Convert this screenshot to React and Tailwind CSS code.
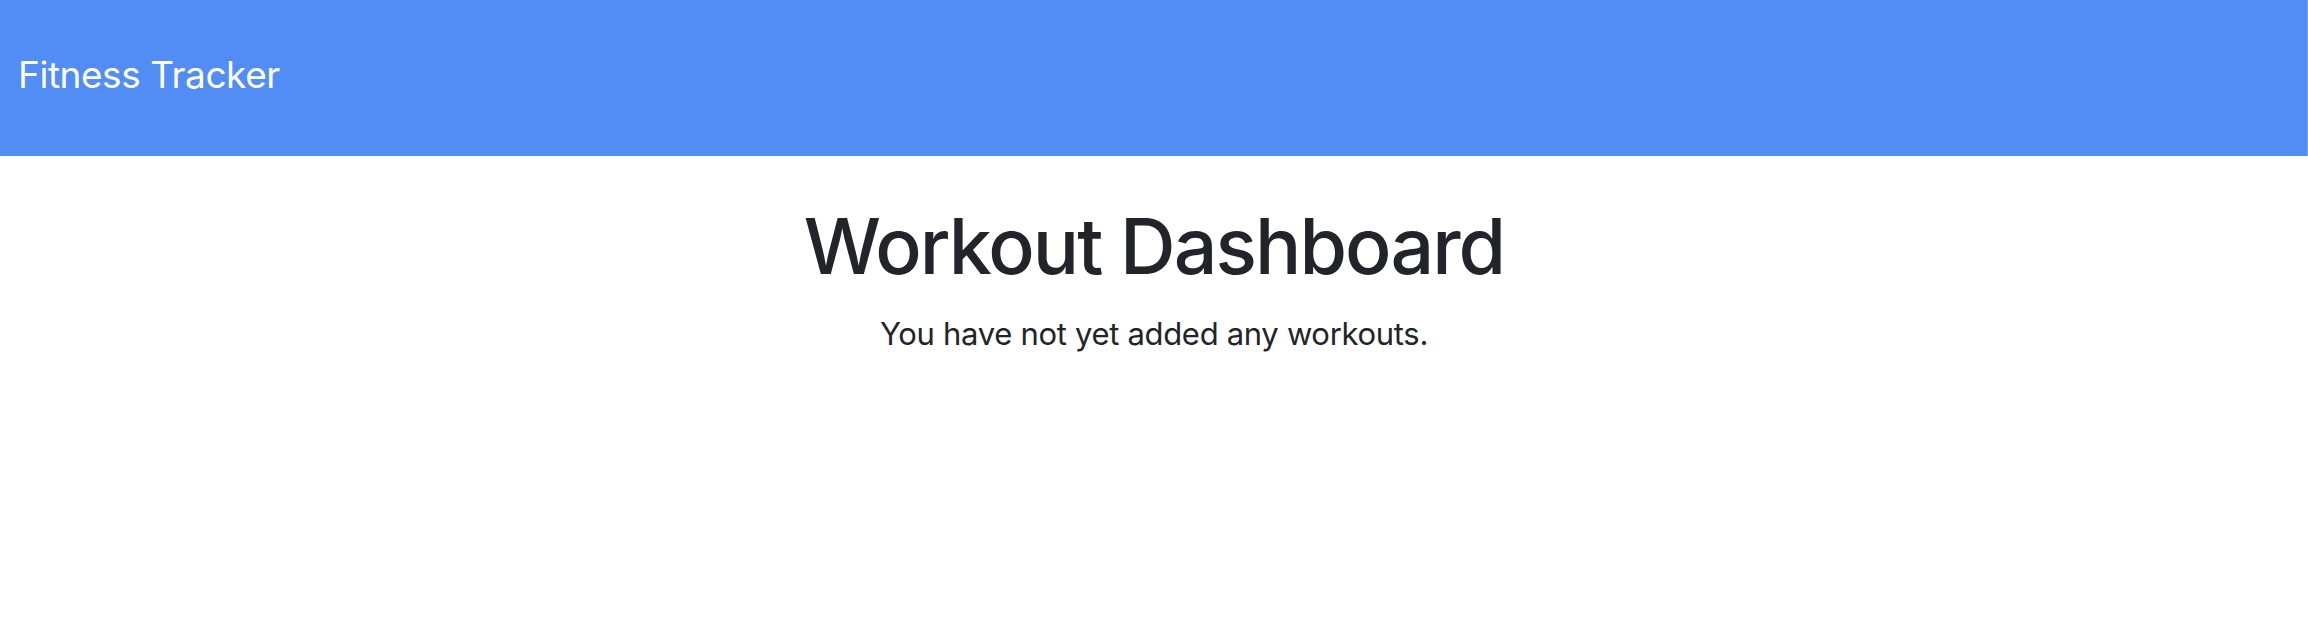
function App() {
  return (
    <div className="min-h-screen bg-white font-['Inter','Liberation_Sans',Arial,sans-serif] text-[#212529]">

      <nav className="h-[156px] bg-[#528cf5] border-r border-[#7aa6f8] flex items-center px-[18px] pb-[8px]">
        <span className="text-[37px] leading-none text-white tracking-[-0.012em]">
          Fitness Tracker
        </span>
      </nav>

      <main className="flex flex-col items-center">
        <h1 className="mt-[52px] text-[77px] leading-none font-medium tracking-[-0.025em]">
          Workout Dashboard
        </h1>

        <p className="mt-[33px] text-[31px] leading-none tracking-[-0.01em]">
          You have not yet added any workouts.
        </p>
      </main>

    </div>
  );
}

export default App;
